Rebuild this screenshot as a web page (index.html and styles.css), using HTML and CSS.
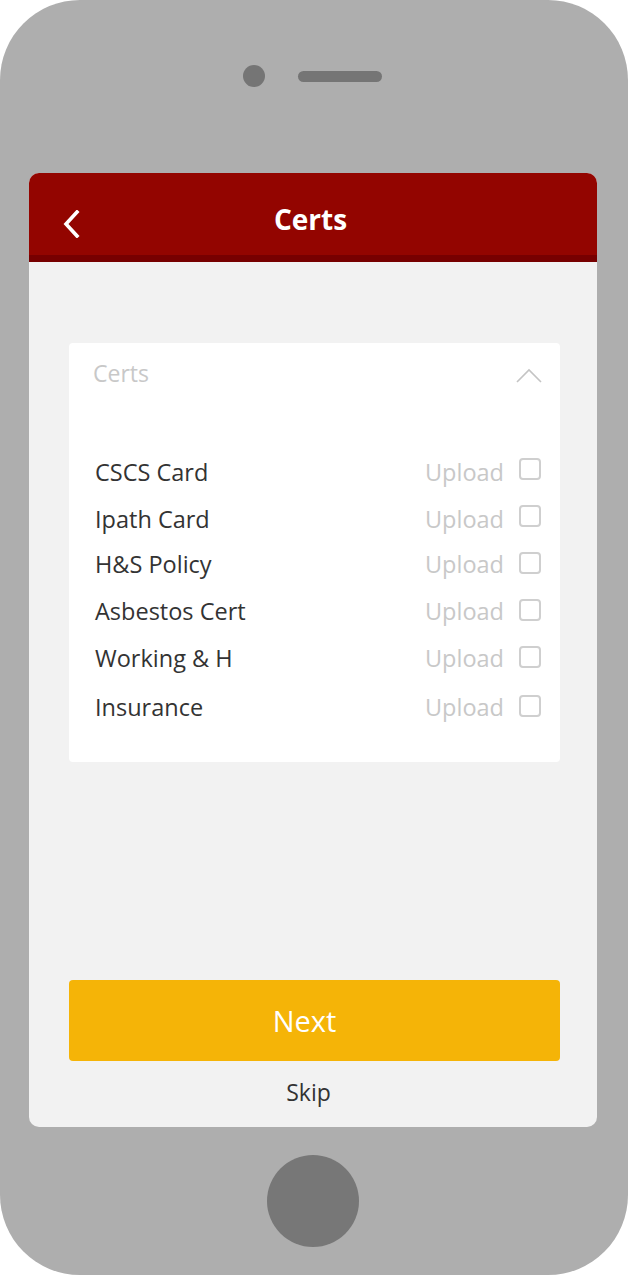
FILE: index.html
```html
<!DOCTYPE html>
<html>
<head>
<meta charset="utf-8">
<link rel="stylesheet" href="styles.css">
</head>
<body>
<div class="phone">
  <div class="sensors">
    <span class="camera"></span>
    <span class="speaker"></span>
  </div>
  <div class="screen">
    <header class="appbar">
      <svg class="back" width="18" height="28" viewBox="0 0 18 28"><path d="M15 2 L4 14 L15 26" fill="none" stroke="#fff" stroke-width="3.6" stroke-linecap="square"/></svg>
      <h1 class="title">Certs</h1>
    </header>
    <main class="content">
      <section class="card">
        <div class="card-head">
          <span class="placeholder">Certs</span>
          <svg class="chev" width="26" height="16" viewBox="0 0 26 16"><path d="M1 14 L13 2 L25 14" fill="none" stroke="#c4c4c4" stroke-width="1.6"/></svg>
        </div>
        <ul class="list">
          <li class="row"><span class="label">CSCS Card</span><span class="upload">Upload</span><span class="box"></span></li>
          <li class="row"><span class="label">Ipath Card</span><span class="upload">Upload</span><span class="box"></span></li>
          <li class="row r3"><span class="label">H&amp;S Policy</span><span class="upload">Upload</span><span class="box low"></span></li>
          <li class="row"><span class="label">Asbestos Cert</span><span class="upload">Upload</span><span class="box low"></span></li>
          <li class="row"><span class="label">Working &amp; H</span><span class="upload">Upload</span><span class="box low"></span></li>
          <li class="row r6"><span class="label">Insurance</span><span class="upload">Upload</span><span class="box low"></span></li>
        </ul>
      </section>
      <button class="next">Next</button>
      <div class="skip">Skip</div>
    </main>
  </div>
  <div class="home"></div>
</div>
</body>
</html>
```
FILE: styles.css
```css
* { box-sizing: border-box; }
html, body { margin: 0; padding: 0; background: #fff; }
body { font-family: "Open Sans", "Noto Sans", sans-serif; }
.phone {
  width: 628px;
  height: 1275px;
  background: #aeaeae;
  border-radius: 80px;
  display: flex;
  flex-direction: column;
  align-items: center;
  padding-top: 65px;
}
.sensors {
  height: 22px;
  display: flex;
  align-items: center;
  gap: 33px;
  margin-left: -4px;
}
.camera {
  width: 22px; height: 22px; border-radius: 50%;
  background: #757575;
}
.speaker {
  width: 84px; height: 11px; border-radius: 6px;
  background: #757575;
}
.screen {
  margin-top: 86px;
  width: 568px;
  height: 954px;
  border-radius: 10px;
  overflow: hidden;
  background: #f2f2f2;
  display: flex;
  flex-direction: column;
  align-self: flex-start;
  margin-left: 29px;
}
.appbar {
  height: 89px;
  background: #930500;
  border-bottom: 7px solid #770000;
  display: flex;
  align-items: center;
  justify-content: center;
  position: relative;
}
.back { position: absolute; left: 33px; top: 37px; }
.title {
  margin: 0;
  color: #fff;
  font-size: 28px;
  font-weight: 700;
  line-height: 1;
  margin-top: 9px;
  margin-left: -5px;
}
.content {
  flex: 1;
  display: flex;
  flex-direction: column;
  padding: 81px 37px 20px 40px;
}
.card {
  background: #fff;
  border-radius: 4px;
  height: 419px;
  padding: 16px 19px 0 24px;
}
.card-head {
  height: 30px;
  display: flex;
  align-items: center;
  justify-content: space-between;
}
.placeholder { color: #c8c8c8; font-size: 23px; line-height: 30px; margin-top: -2px; }
.chev { margin-top: 4px; margin-right: -1px; }
.list {
  list-style: none;
  margin: 59px 0 0 0;
  padding: 0;
}
.row {
  height: 47px;
  display: flex;
  align-items: center;
}
.r3 { margin-top: -2px; }
.r6 { margin-top: 2px; }
.label { flex: 1; color: #333; font-size: 23.5px; padding-left: 2px; }
.upload { color: #c8c8c8; font-size: 23.5px; margin-right: 15px; }
.box {
  width: 22px; height: 22px;
  border: 2px solid #cfcfcf;
  border-radius: 4px;
  margin-top: -5px;
}
.box.low { margin-top: -1px; }
.next {
  margin-top: auto;
  height: 81px;
  border: 0;
  border-radius: 4px;
  background: #f5b407;
  color: #fff;
  font-family: inherit;
  font-size: 29px;
  padding: 0 20px 0 0;
}
.skip {
  margin-top: 16px;
  text-align: center;
  color: #333;
  font-size: 23px;
  line-height: 30px;
  padding-right: 12px;
}
.home {
  margin-top: 28px;
  width: 92px; height: 92px; border-radius: 50%;
  background: #777;
  margin-left: -2px;
}
```
